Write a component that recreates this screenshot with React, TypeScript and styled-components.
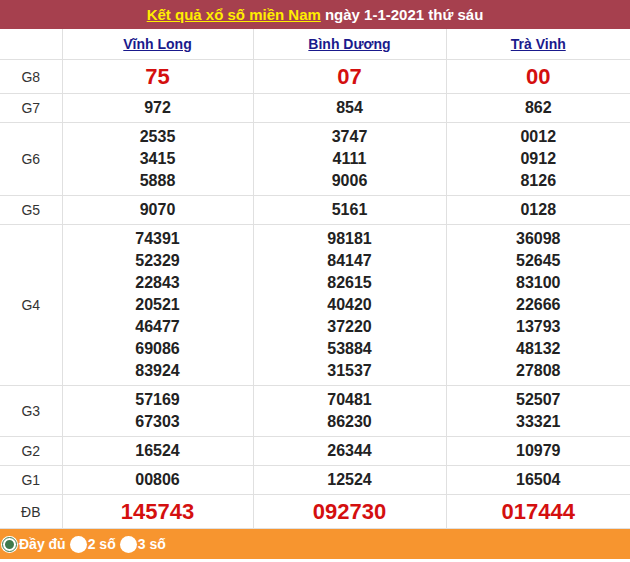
import React from 'react'
import styled, { createGlobalStyle } from 'styled-components'

const Global = createGlobalStyle`
	body { margin: 0; font-family: Arial, "Liberation Sans", sans-serif; background: #fff; }
`

const Wrap = styled.div`
	width: 630px;
`

const Title = styled.div`
	height: 29px;
	background: #a6404e;
	color: #fff;
	font-weight: bold;
	font-size: 15px;
	display: flex;
	align-items: center;
	justify-content: center;

	a { color: #ffee00; text-decoration: underline; margin-right: 4px; }
`

const Table = styled.table`
	width: 630px;
	border-collapse: collapse;
	table-layout: fixed;

	td { border: 1px solid #e0e0e0; text-align: center; padding: 3px 0; }
	tr td:first-child { border-left: none; }
	tr td:last-child { border-right: none; }
`

const Head = styled.td`
	height: 24px;
	a { color: #1a1a8c; text-decoration: underline; font-size: 14px; font-weight: bold; }
`

const Label = styled.td`
	font-size: 14px;
	color: #333;
`

const Num = styled.div<{ $big?: boolean }>`
	font-weight: bold;
	font-size: ${p => (p.$big ? '22px' : '16px')};
	line-height: ${p => (p.$big ? '27px' : '22px')};
	color: ${p => (p.$big ? '#d40f0f' : '#222')};
`

const Footer = styled.div`
	height: 30px;
	background: #f7952f;
	display: flex;
	align-items: center;
	gap: 6px;
	padding-left: 3px;
	color: #fff;
	font-weight: bold;
	font-size: 14px;
`

const Opt = styled.label`
	display: flex;
	align-items: center;
	gap: 3px;
`

const Dot = styled.span<{ $on?: boolean }>`
	width: 13px;
	height: 13px;
	border-radius: 50%;
	background: ${p => (p.$on ? '#3f7a4d' : '#fff')};
	box-shadow: 0 0 0 2px #fff;
	box-sizing: border-box;
	border: ${p => (p.$on ? '2px solid #fff' : 'none')};
	outline: ${p => (p.$on ? '1px solid #3f7a4d' : 'none')};
`

const rows: [string, string[][], boolean?][] = [
	['G8', [['75'], ['07'], ['00']], true],
	['G7', [['972'], ['854'], ['862']]],
	['G6', [['2535', '3415', '5888'], ['3747', '4111', '9006'], ['0012', '0912', '8126']]],
	['G5', [['9070'], ['5161'], ['0128']]],
	['G4', [
		['74391', '52329', '22843', '20521', '46477', '69086', '83924'],
		['98181', '84147', '82615', '40420', '37220', '53884', '31537'],
		['36098', '52645', '83100', '22666', '13793', '48132', '27808'],
	]],
	['G3', [['57169', '67303'], ['70481', '86230'], ['52507', '33321']]],
	['G2', [['16524'], ['26344'], ['10979']]],
	['G1', [['00806'], ['12524'], ['16504']]],
	['ĐB', [['145743'], ['092730'], ['017444']], true],
]

export default function App() {
	return (
		<Wrap>
			<Global />
			<Title><a href="#">Kết quả xổ số miền Nam</a> ngày 1-1-2021 thứ sáu</Title>
			<Table>
				<colgroup>
					<col style={{ width: 62 }} />
					<col style={{ width: 191 }} />
					<col style={{ width: 193 }} />
					<col style={{ width: 184 }} />
				</colgroup>
				<tbody>
					<tr>
						<Head style={{ borderTop: 'none' }} />
						<Head style={{ borderTop: 'none' }}><a href="#">Vĩnh Long</a></Head>
						<Head style={{ borderTop: 'none' }}><a href="#">Bình Dương</a></Head>
						<Head style={{ borderTop: 'none' }}><a href="#">Trà Vinh</a></Head>
					</tr>
					{rows.map(([label, cols, big]) => (
						<tr key={label}>
							<Label>{label}</Label>
							{cols.map((nums, i) => (
								<td key={i}>
									{nums.map(n => <Num key={n} $big={big}>{n}</Num>)}
								</td>
							))}
						</tr>
					))}
				</tbody>
			</Table>
			<Footer>
				<Opt><Dot $on />Đầy đủ</Opt>
				<Opt><Dot />2 số</Opt>
				<Opt><Dot />3 số</Opt>
			</Footer>
		</Wrap>
	)
}
